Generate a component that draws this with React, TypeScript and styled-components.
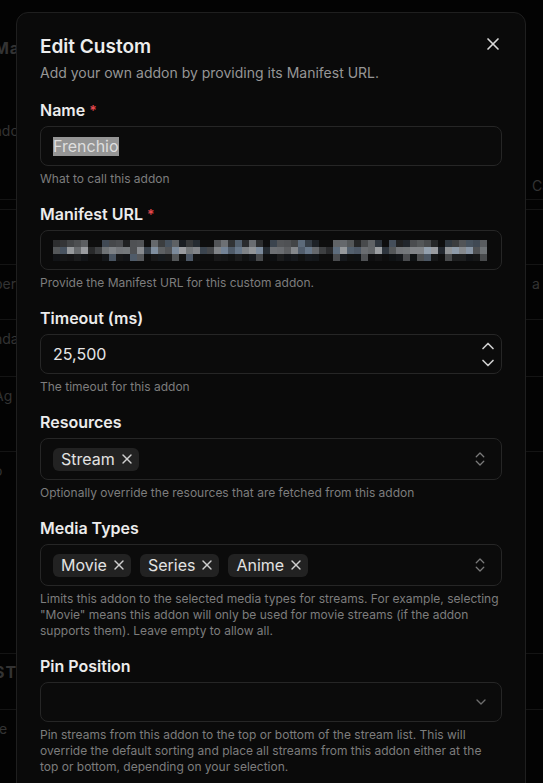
import styled, { createGlobalStyle } from 'styled-components';
import { X, ChevronUp, ChevronDown, ChevronsUpDown } from 'lucide-react';

const GlobalStyle = createGlobalStyle`
  * { box-sizing: border-box; }
  html, body {
    margin: 0;
    padding: 0;
    background: #000;
  }
  body {
    font-family: Inter, "Noto Sans", sans-serif;
    overflow: hidden;
  }
`;

const Screen = styled.div`
  position: relative;
  width: 543px;
  height: 783px;
  overflow: hidden;
  background: #030303;
`;

// dimmed settings page sitting behind the dialog
const Backdrop = styled.div`
  display: flex;
  flex-direction: column;
  color: #333;
`;

const BgRow = styled.div<{ $h: number; $line?: boolean }>`
  display: grid;
  grid-template-columns: 532px 1fr;
  align-items: center;
  height: ${(p) => p.$h}px;
  border-bottom: ${(p) => (p.$line ? '1px solid #141414' : 'none')};
`;

const BgLeft = styled.span<{ $bold?: boolean }>`
  margin-left: -6px;
  font-size: ${(p) => (p.$bold ? 16 : 14)}px;
  font-weight: ${(p) => (p.$bold ? 700 : 400)};
  letter-spacing: ${(p) => (p.$bold ? '0.06em' : '0')};
  white-space: nowrap;
`;

const BgRight = styled.span`
  font-size: 14px;
  white-space: nowrap;
`;

const Dialog = styled.div`
  position: absolute;
  top: 12px;
  left: 16px;
  width: 510px;
  padding: 22px 23px 24px;
  background: #0a0a0a;
  border: 1px solid #1f1f1f;
  border-radius: 12px;
`;

const CloseButton = styled.button`
  position: absolute;
  top: 21px;
  right: 22px;
  display: flex;
  padding: 0;
  border: none;
  background: none;
  color: #d8d8d8;
  cursor: pointer;
`;

const Title = styled.h2`
  margin: 0;
  font-size: 19px;
  line-height: 24px;
  font-weight: 600;
  color: #ededed;
`;

const Subtitle = styled.p`
  margin: 4px 0 0;
  font-size: 14px;
  line-height: 20px;
  color: #969696;
`;

const Form = styled.div`
  display: flex;
  flex-direction: column;
  gap: 15px;
  margin-top: 15px;
`;

const Field = styled.div`
  display: flex;
  flex-direction: column;
`;

const Label = styled.label`
  display: block;
  height: 24px;
  margin-bottom: 4px;
  font-size: 16px;
  line-height: 24px;
  font-weight: 600;
  color: #ececec;
`;

const Required = styled.span`
  margin-left: 4px;
  font-size: 14px;
  line-height: 0;
  color: #e5484d;
`;

const Control = styled.div<{ $multi?: boolean }>`
  display: flex;
  align-items: center;
  justify-content: space-between;
  height: ${(p) => (p.$multi ? 42 : 40)}px;
  padding: 0 12px;
  background: #0b0b0b;
  border: 1px solid #262626;
  border-radius: 8px;
  font-size: 16px;
  color: #e6e6e6;
`;

const Selected = styled.span`
  display: inline-block;
  line-height: 19px;
  background: #959595;
  color: #dedede;
`;

const Mosaic = styled.div`
  display: grid;
  grid-template-columns: repeat(62, 7px);
  grid-auto-rows: 7px;
`;

const Stepper = styled.div`
  display: flex;
  flex-direction: column;
  margin-right: -9px;
  color: #cfcfcf;
  & > svg + svg {
    margin-top: -3px;
  }
`;

const Chips = styled.div`
  display: flex;
  gap: 9px;
`;

const Chip = styled.span`
  display: inline-flex;
  align-items: center;
  gap: 4px;
  height: 23px;
  padding: 0 4px 0 8px;
  background: #222;
  border-radius: 6px;
  font-size: 16px;
  color: #e2e2e2;
  svg {
    color: #cfcfcf;
  }
`;

const Caret = styled.span<{ $dim?: boolean }>`
  display: flex;
  color: ${(p) => (p.$dim ? '#6d6d6d' : '#7a7a7a')};
`;

const Helper = styled.p`
  margin: 5px 0 0;
  font-size: 12px;
  line-height: 16px;
  color: #7d7d7d;
`;

const bgRows: { h: number; left?: string; right?: string; bold?: boolean; line?: boolean }[] = [
  { h: 30 },
  { h: 36, left: 'Mar', bold: true },
  { h: 46 },
  { h: 36, left: 'ado' },
  { h: 22 },
  { h: 30, right: 'Ca', line: true },
  { h: 10, line: true },
  { h: 55, line: true },
  { h: 36, left: 'ber', right: 'a p' },
  { h: 19, line: true },
  { h: 36, left: 'nda' },
  { h: 21, line: true },
  { h: 36, left: 'Ag' },
  { h: 39, line: true },
  { h: 36, left: 'o' },
  { h: 166, line: true },
  { h: 36, left: 'ST', bold: true },
  { h: 20, line: true },
  { h: 36, left: 're' },
];

// pixelated stand-in for the hidden manifest address
const gapCols = [5, 6, 13, 21, 22, 30, 38, 39, 47, 55];
const mosaic = Array.from({ length: 3 * 62 }, (_, i) => {
  const row = Math.floor(i / 62);
  const col = i % 62;
  const n = Math.abs(Math.sin(i * 12.9898 + 78.233) * 43758.5453) % 1;
  const m = Math.abs(Math.sin(i * 4.1414 + 11.7) * 9631.77) % 1;
  if (gapCols.includes(col) && row !== 1) return '#0e0e0e';
  let light = row === 1 ? 32 + n * 32 : row === 0 ? 12 + n * 34 : 6 + (n > 0.75 ? n * 30 : n * 8);
  if (gapCols.includes(col)) light *= 0.5;
  const sat = m > 0.6 ? 14 : 3;
  return `hsl(212, ${sat}%, ${light.toFixed(0)}%)`;
});

function FormField({ label, required, helper, multi, children }: {
  label: string;
  required?: boolean;
  helper: string;
  multi?: boolean;
  children: React.ReactNode;
}) {
  return (
    <Field>
      <Label>
        {label}
        {required && <Required>*</Required>}
      </Label>
      <Control $multi={multi}>{children}</Control>
      <Helper>{helper}</Helper>
    </Field>
  );
}

function ChipList({ items }: { items: string[] }) {
  return (
    <Chips>
      {items.map((item) => (
        <Chip key={item}>
          {item}
          <X size={16} strokeWidth={2} />
        </Chip>
      ))}
    </Chips>
  );
}

export default function App() {
  return (
    <Screen>
      <GlobalStyle />
      <Backdrop>
        {bgRows.map((r, i) => (
          <BgRow key={i} $h={r.h} $line={r.line}>
            <div>{r.left && <BgLeft $bold={r.bold}>{r.left}</BgLeft>}</div>
            <div>{r.right && <BgRight>{r.right}</BgRight>}</div>
          </BgRow>
        ))}
      </Backdrop>

      <Dialog>
        <CloseButton aria-label="Close">
          <X size={20} strokeWidth={2} />
        </CloseButton>
        <Title>Edit Custom</Title>
        <Subtitle>Add your own addon by providing its Manifest URL.</Subtitle>

        <Form>
          <FormField label="Name" required helper="What to call this addon">
            <span>
              <Selected>Frenchio</Selected>
            </span>
          </FormField>

          <FormField label="Manifest URL" required helper="Provide the Manifest URL for this custom addon.">
            <Mosaic>
              {mosaic.map((c, i) => (
                <span key={i} style={{ background: c }} />
              ))}
            </Mosaic>
          </FormField>

          <FormField label="Timeout (ms)" helper="The timeout for this addon">
            <span>25,500</span>
            <Stepper>
              <ChevronUp size={20} strokeWidth={2} />
              <ChevronDown size={20} strokeWidth={2} />
            </Stepper>
          </FormField>

          <FormField
            label="Resources"
            multi
            helper="Optionally override the resources that are fetched from this addon"
          >
            <ChipList items={['Stream']} />
            <Caret>
              <ChevronsUpDown size={18} strokeWidth={1.75} />
            </Caret>
          </FormField>

          <FormField
            label="Media Types"
            multi
            helper={
              'Limits this addon to the selected media types for streams. For example, selecting "Movie" means this addon will only be used for movie streams (if the addon supports them). Leave empty to allow all.'
            }
          >
            <ChipList items={['Movie', 'Series', 'Anime']} />
            <Caret>
              <ChevronsUpDown size={18} strokeWidth={1.75} />
            </Caret>
          </FormField>

          <FormField
            label="Pin Position"
            helper="Pin streams from this addon to the top or bottom of the stream list. This will override the default sorting and place all streams from this addon either at the top or bottom, depending on your selection."
          >
            <span />
            <Caret $dim>
              <ChevronDown size={16} strokeWidth={2} />
            </Caret>
          </FormField>
        </Form>
      </Dialog>
    </Screen>
  );
}
